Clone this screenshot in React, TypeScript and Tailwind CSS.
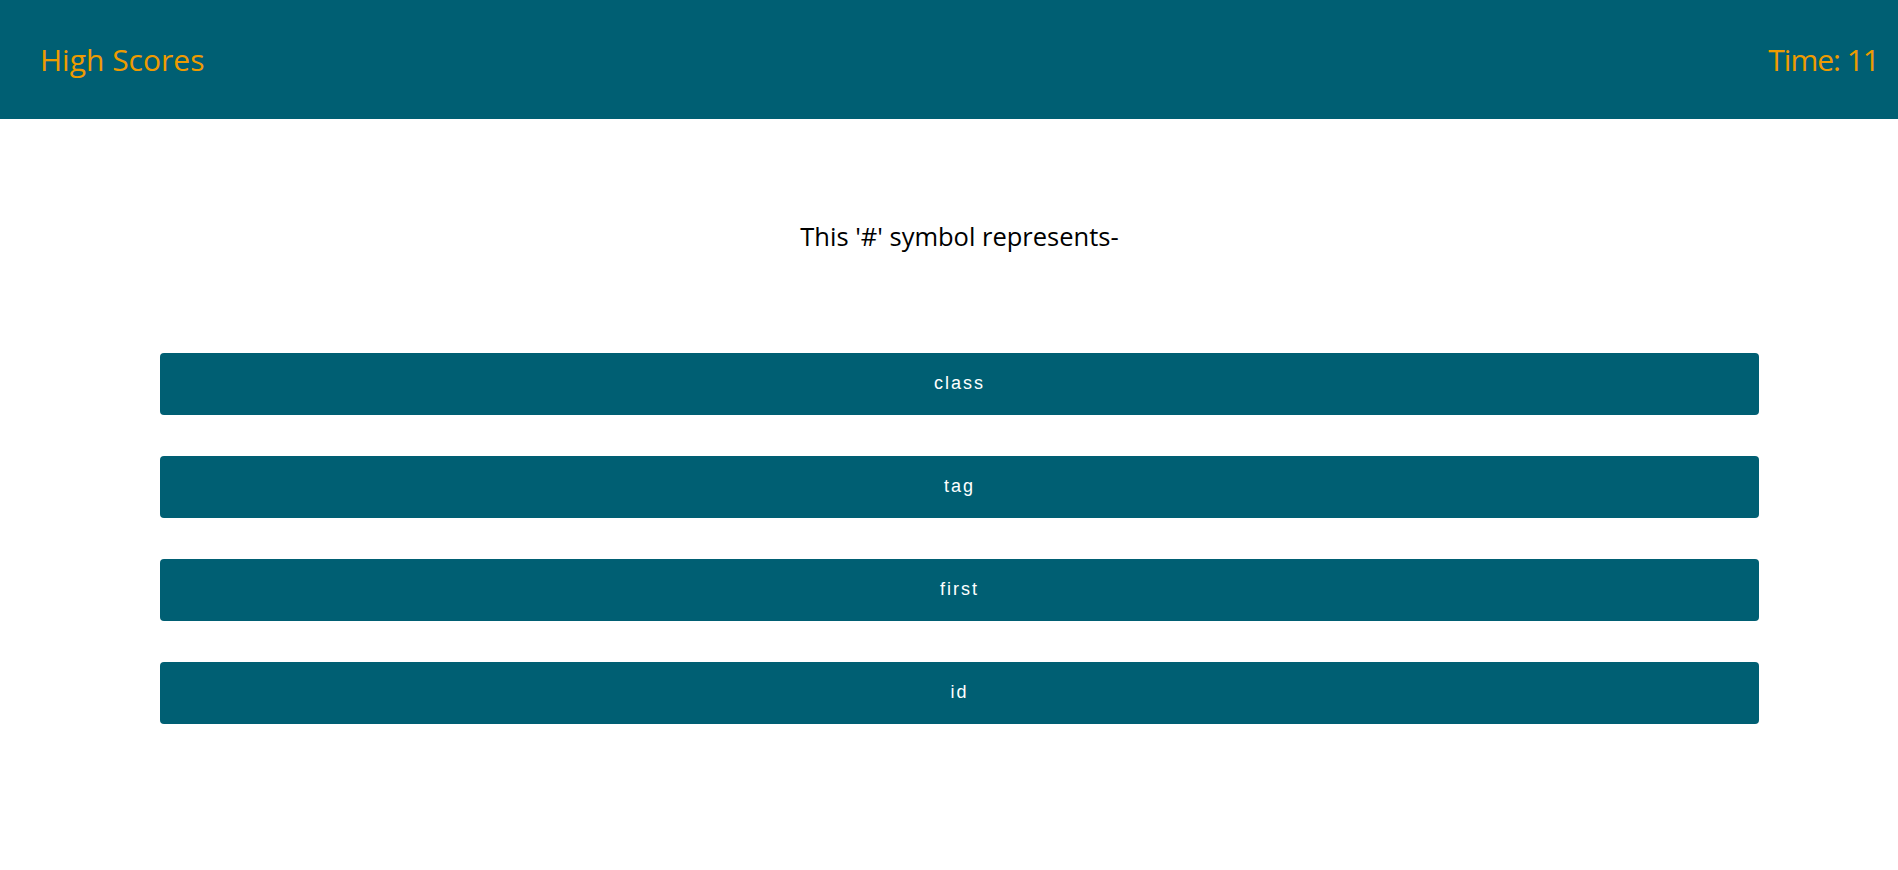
const answers = ["class", "tag", "first", "id"];

export default function App() {
  return (
    <div className="min-h-[870px] bg-white font-['Open_Sans',sans-serif]">
      <header className="flex h-[119px] items-center justify-between bg-[#005f73] pl-[40px] pr-[19px] text-[#ee9b00]">
        <a className="text-[30px] leading-none">High Scores</a>
        <span className="text-[30px] leading-none tracking-[-1px]">Time: 11</span>
      </header>
      <main className="flex flex-col">
        <h2 className="mt-[105px] ml-[160px] w-[1599px] text-center text-[25.5px] leading-none text-black">
          This '#' symbol represents-
        </h2>
        <div className="mt-[103px] ml-[160px] flex w-[1599px] flex-col gap-[41px]">
          {answers.map((a) => (
            <button
              key={a}
              className="h-[62px] w-full rounded-[4px] bg-[#005f73] font-['Liberation_Sans',sans-serif] text-[18px] tracking-[2px] text-white"
            >
              {a}
            </button>
          ))}
        </div>
      </main>
    </div>
  );
}
